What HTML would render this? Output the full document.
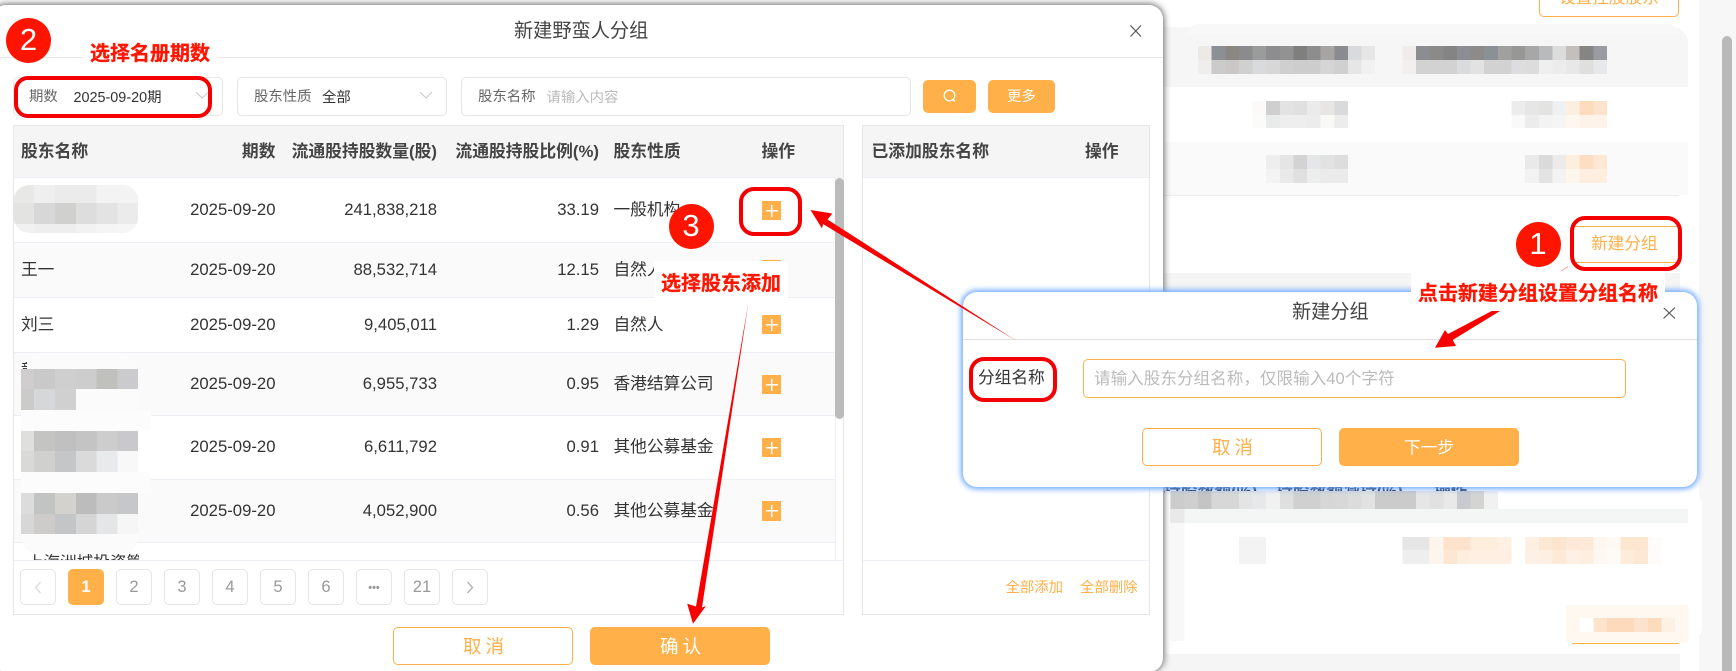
<!DOCTYPE html>
<html lang="zh-CN">
<head>
<meta charset="utf-8">
<title>新建野蛮人分组</title>
<style>
html,body{margin:0;padding:0;width:1736px;height:671px;overflow:hidden;background:#fff}
body{position:relative;font-family:"Liberation Sans","Noto Sans CJK SC",sans-serif;color:#333}
div,span{box-sizing:border-box}
.a{position:absolute}
.t{position:absolute;white-space:nowrap;line-height:20px;height:20px;margin-top:1px}
.c{font-size:16.7px;color:#333}
.h{font-size:16.8px;font-weight:700;color:#444}
.s{font-size:14.4px}
.box{position:absolute;border:1px solid #e6e6e6;border-radius:5px;background:#fff}
.add{position:absolute;left:762px;width:19px;height:19px;background:linear-gradient(#fff,#fff) center/12px 1.5px no-repeat,linear-gradient(#fff,#fff) center/1.5px 12px no-repeat,#ffb049}
.row{position:absolute;left:14px;width:821px;border-bottom:1px solid #eeeff4}
.p{position:absolute;top:569px;width:36px;height:36px;border:1px solid #e6e6e6;border-radius:5px;text-align:center;line-height:34px;font-size:16.6px;color:#999;background:#fff}
.btn{position:absolute;height:38px;border-radius:5px;text-align:center;line-height:37px;font-size:18.5px;letter-spacing:4px;padding-left:5px;border:1px solid #ffb049;color:#ffb049;background:#fff}
.on{background:#ffb049;color:#fff}
.circ{position:absolute;width:45px;height:45px;border-radius:50%;background:#ff1400;color:#fff;font-size:31px;line-height:44px;text-align:center}
.lab{position:absolute;background:#fff;color:#ff1500;font-family:"Noto Sans CJK SC",sans-serif;font-weight:700;font-size:20px;text-align:center;white-space:nowrap;-webkit-text-stroke:.3px #ff1500}
.rr{position:absolute;border:4.5px solid #f50000;border-radius:15px}
svg{position:absolute;left:0;top:0}
</style>
</head>
<body>

<!-- background page -->
<div class="a" style="left:1699px;top:0;width:37px;height:671px;background:#f7f7f7"></div>
<div class="a" style="left:1722px;top:36px;width:10px;height:640px;background:#b9b9b9;border-radius:5px 5px 0 0"></div>
<div class="a" style="left:1539px;top:-20px;width:140px;height:37px;border:1px solid #ffb049;border-radius:5px;text-align:center;color:#ffb049;font-size:16.6px;line-height:33px">设置控股股东</div>
<div class="a" style="left:1160px;top:27px;width:528px;height:60px;background:#f6f6f6;border-radius:0 16px 0 0"></div>
<div class="a" style="left:1188px;top:24px;width:490px;height:10px;background:#f8f8f8;border-radius:16px 16px 0 0"></div>
<div class="a" style="left:1160px;top:142px;width:528px;height:53px;background:#fafafa"></div>
<div class="a" style="left:1160px;top:195px;width:519px;height:1px;background:#ececec"></div>
<div class="a" style="left:1160px;top:273px;width:520px;height:20px;background:#f5f5f5"></div>
<div class="a" style="left:1575px;top:226px;width:104px;height:37px;border-top:1px solid #ffb049;border-bottom:1px solid #ffb049"></div>
<div class="t" style="left:1591px;top:233px;font-size:16.7px;color:#ffb049">新建分组</div>
<div class="t h" style="left:1164px;top:481px;color:#24324a">持股数额(%)</div>
<div class="t h" style="left:1276px;top:481px;color:#24324a">持股数额减持(%)</div>
<div class="t h" style="left:1434px;top:481px;color:#24324a">操作</div>
<div class="a" style="left:1165px;top:491px;width:537px;height:150px;background:#fff;border-radius:0 14px 14px 14px"></div>
<div class="a" style="left:1170px;top:509px;width:518px;height:14px;background:#f4f6f6"></div>
<div class="a" style="left:1572px;top:643px;width:107px;height:1px;background:#ffb049"></div>
<div class="a" style="left:1165px;top:654px;width:515px;height:17px;background:#f5f5f5"></div>

<svg width="1736" height="671" shape-rendering="crispEdges">
<g transform="translate(1198,0) scale(13.63,1)">
<!-- row1 top -->
<g>
<rect x="0" y="46" width="1" height="14" fill="#ece9e7"/><rect x="1" y="46" width="1" height="14" fill="#8c8f94"/><rect x="2" y="46" width="1" height="14" fill="#8a8783"/><rect x="3" y="46" width="1" height="14" fill="#8b8b8d"/><rect x="4" y="46" width="1" height="14" fill="#9a9c9b"/><rect x="5" y="46" width="1" height="14" fill="#8d8d8f"/><rect x="6" y="46" width="1" height="14" fill="#929293"/><rect x="7" y="46" width="1" height="14" fill="#7f7f7d"/><rect x="8" y="46" width="1" height="14" fill="#8d8d8d"/><rect x="9" y="46" width="1" height="14" fill="#a6a5a3"/><rect x="10" y="46" width="1" height="14" fill="#898b8e"/><rect x="11" y="46" width="1" height="14" fill="#d9dadc"/><rect x="12" y="46" width="1" height="14" fill="#e6e6e6"/>
<rect x="0" y="60" width="1" height="14" fill="#efeeec"/><rect x="1" y="60" width="1" height="14" fill="#cbcbcb"/><rect x="2" y="60" width="1" height="14" fill="#c9c8c6"/><rect x="3" y="60" width="1" height="14" fill="#cfd0cf"/><rect x="4" y="60" width="1" height="14" fill="#d9dadb"/><rect x="5" y="60" width="1" height="14" fill="#d6d7d6"/><rect x="6" y="60" width="1" height="14" fill="#cecfce"/><rect x="7" y="60" width="1" height="14" fill="#cdcdcd"/><rect x="8" y="60" width="1" height="14" fill="#cdcdcd"/><rect x="9" y="60" width="1" height="14" fill="#d4d5d4"/><rect x="10" y="60" width="1" height="14" fill="#cfd0cf"/><rect x="11" y="60" width="1" height="14" fill="#e6e6e6"/><rect x="12" y="60" width="1" height="14" fill="#f1f1f1"/>
<rect x="15" y="46" width="1" height="14" fill="#f0ecea"/><rect x="16" y="46" width="1" height="14" fill="#8c8d90"/><rect x="17" y="46" width="1" height="14" fill="#8c8a88"/><rect x="18" y="46" width="1" height="14" fill="#848484"/><rect x="19" y="46" width="1" height="14" fill="#8c8d92"/><rect x="20" y="46" width="1" height="14" fill="#8d8b8a"/><rect x="21" y="46" width="1" height="14" fill="#8a9093"/><rect x="22" y="46" width="1" height="14" fill="#a0a09e"/><rect x="23" y="46" width="1" height="14" fill="#979796"/><rect x="24" y="46" width="1" height="14" fill="#a7a7a8"/><rect x="25" y="46" width="1" height="14" fill="#b9babc"/><rect x="26" y="46" width="1" height="14" fill="#dcdcdc"/><rect x="27" y="46" width="1" height="14" fill="#c3c0bc"/><rect x="28" y="46" width="1" height="14" fill="#858583"/><rect x="29" y="46" width="1" height="14" fill="#989b9f"/>
<rect x="15" y="60" width="1" height="14" fill="#f1f0ef"/><rect x="16" y="60" width="1" height="14" fill="#d2d2d2"/><rect x="17" y="60" width="1" height="14" fill="#d2d2d2"/><rect x="18" y="60" width="1" height="14" fill="#d2d2d2"/><rect x="19" y="60" width="1" height="14" fill="#dadbdc"/><rect x="20" y="60" width="1" height="14" fill="#e2e2e2"/><rect x="21" y="60" width="1" height="14" fill="#d2d2d3"/><rect x="22" y="60" width="1" height="14" fill="#d2d2d2"/><rect x="23" y="60" width="1" height="14" fill="#dddddf"/><rect x="24" y="60" width="1" height="14" fill="#dcdcdc"/><rect x="25" y="60" width="1" height="14" fill="#efefef"/><rect x="26" y="60" width="1" height="14" fill="#ececec"/><rect x="27" y="60" width="1" height="14" fill="#e8e8e8"/><rect x="28" y="60" width="1" height="14" fill="#dfdfdd"/><rect x="29" y="60" width="1" height="14" fill="#e7e8ea"/>
</g>
<!-- row2 -->
<g>
<rect x="4" y="101" width="1" height="14" fill="#fbfaf8"/><rect x="5" y="101" width="1" height="14" fill="#cfcfcf"/><rect x="6" y="101" width="1" height="14" fill="#e3e3e3"/><rect x="7" y="101" width="1" height="14" fill="#e0e0e0"/><rect x="8" y="101" width="1" height="14" fill="#ebebeb"/><rect x="9" y="101" width="1" height="14" fill="#e7e6e4"/><rect x="10" y="101" width="1" height="14" fill="#d9dadc"/>
<rect x="4" y="115" width="1" height="13" fill="#fbfbfa"/><rect x="5" y="115" width="1" height="13" fill="#e9eaea"/><rect x="6" y="115" width="1" height="13" fill="#eeeeee"/><rect x="7" y="115" width="1" height="13" fill="#eeeeee"/><rect x="8" y="115" width="1" height="13" fill="#ececec"/><rect x="9" y="115" width="1" height="13" fill="#f9f9f6"/><rect x="10" y="115" width="1" height="13" fill="#ececec"/>
<rect x="23" y="101" width="1" height="14" fill="#ececec"/><rect x="24" y="101" width="1" height="14" fill="#e6e6e6"/><rect x="25" y="101" width="1" height="14" fill="#e3e3e1"/><rect x="26" y="101" width="1" height="14" fill="#eef0f2"/><rect x="27" y="101" width="1" height="14" fill="#fdefe0"/><rect x="28" y="101" width="1" height="14" fill="#fddcbe"/><rect x="29" y="101" width="1" height="14" fill="#fde3cc"/>
<rect x="23" y="115" width="1" height="13" fill="#f9f9f9"/><rect x="24" y="115" width="1" height="13" fill="#ececec"/><rect x="25" y="115" width="1" height="13" fill="#f3f3f3"/><rect x="26" y="115" width="1" height="13" fill="#f5f5f5"/><rect x="27" y="115" width="1" height="13" fill="#fef7f0"/><rect x="28" y="115" width="1" height="13" fill="#fef3e8"/><rect x="29" y="115" width="1" height="13" fill="#fef3ea"/>
</g>
<!-- row3 -->
<g>
<rect x="5" y="155" width="1" height="14" fill="#eeeeee"/><rect x="6" y="155" width="1" height="14" fill="#e5e5e5"/><rect x="7" y="155" width="1" height="14" fill="#d3d3d3"/><rect x="8" y="155" width="1" height="14" fill="#e4e6e8"/><rect x="9" y="155" width="1" height="14" fill="#e2e2e2"/><rect x="10" y="155" width="1" height="14" fill="#dcdddc"/>
<rect x="5" y="169" width="1" height="14" fill="#f3f3f3"/><rect x="6" y="169" width="1" height="14" fill="#e9e9e9"/><rect x="7" y="169" width="1" height="14" fill="#e0e0e0"/><rect x="8" y="169" width="1" height="14" fill="#eceeed"/><rect x="9" y="169" width="1" height="14" fill="#ebebeb"/><rect x="10" y="169" width="1" height="14" fill="#ebebeb"/>
<rect x="24" y="155" width="1" height="14" fill="#e9e9e9"/><rect x="25" y="155" width="1" height="14" fill="#dadada"/><rect x="26" y="155" width="1" height="14" fill="#ebebeb"/><rect x="27" y="155" width="1" height="14" fill="#fdeedd"/><rect x="28" y="155" width="1" height="14" fill="#fddec2"/><rect x="29" y="155" width="1" height="14" fill="#fce8d4"/>
<rect x="24" y="169" width="1" height="14" fill="#f2f2f2"/><rect x="25" y="169" width="1" height="14" fill="#e3e3e3"/><rect x="26" y="169" width="1" height="14" fill="#f2f3f2"/><rect x="27" y="169" width="1" height="14" fill="#fef5ec"/><rect x="28" y="169" width="1" height="14" fill="#fdeee0"/><rect x="29" y="169" width="1" height="14" fill="#fdeee0"/>
</g>
<!-- lower band -->
<g>
<rect x="-2" y="491" width="1" height="18" fill="#cccccc"/><rect x="-1" y="491" width="1" height="18" fill="#cfcfcf"/><rect x="0" y="491" width="1" height="18" fill="#c4c4c4"/><rect x="1" y="491" width="2" height="18" fill="#d7d7d7"/><rect x="3" y="491" width="1" height="18" fill="#e4e4e4"/><rect x="4" y="491" width="1" height="18" fill="#e6e8ea"/><rect x="5" y="491" width="1" height="18" fill="#f1f1f1"/><rect x="6" y="491" width="1" height="18" fill="#dedfde"/><rect x="7" y="491" width="1" height="18" fill="#cfd0cf"/><rect x="8" y="491" width="1" height="18" fill="#d0d0d0"/><rect x="9" y="491" width="1" height="18" fill="#d6d7d6"/><rect x="10" y="491" width="1" height="18" fill="#d8d8d8"/><rect x="11" y="491" width="1" height="18" fill="#dcdcdc"/><rect x="12" y="491" width="1" height="18" fill="#e2e2e2"/><rect x="13" y="491" width="2" height="18" fill="#cbcbcb"/><rect x="15" y="491" width="1" height="18" fill="#cbcbcb"/><rect x="16" y="491" width="1" height="18" fill="#e6e6e6"/><rect x="17" y="491" width="1" height="18" fill="#e1e1e1"/><rect x="18" y="491" width="1" height="18" fill="#e9e9e9"/><rect x="19" y="491" width="1" height="18" fill="#c9cacf"/><rect x="20" y="491" width="1" height="18" fill="#d4d4d2"/><rect x="21" y="491" width="1" height="18" fill="#f1f1f1"/>
<rect x="-2" y="509" width="1" height="14" fill="#e9e9e9"/><rect x="-2" y="523" width="1" height="118" fill="#f8f8f8"/>
</g>
<!-- orange row -->
<g>
<rect x="3" y="537" width="2" height="27" fill="#f3f3f3"/>
<rect x="15" y="537" width="2" height="13" fill="#e6e6e6"/><rect x="17" y="537" width="1" height="13" fill="#fdf5ec"/><rect x="18" y="537" width="2" height="13" fill="#fde3cc"/><rect x="20" y="537" width="2" height="13" fill="#fdeddc"/><rect x="22" y="537" width="1" height="13" fill="#fef0e2"/>
<rect x="15" y="550" width="2" height="14" fill="#eeeeee"/><rect x="17" y="550" width="1" height="14" fill="#fdf6ef"/><rect x="18" y="550" width="1" height="14" fill="#fde7d2"/><rect x="19" y="550" width="1" height="14" fill="#fdeddd"/><rect x="20" y="550" width="3" height="14" fill="#feefe2"/>
<rect x="24" y="537" width="1" height="13" fill="#fdefe1"/><rect x="25" y="537" width="1" height="13" fill="#fde8d3"/><rect x="26" y="537" width="1" height="13" fill="#fde4cf"/><rect x="27" y="537" width="2" height="13" fill="#fde9d7"/><rect x="29" y="537" width="1" height="13" fill="#fef7f0"/><rect x="30" y="537" width="1" height="13" fill="#fef9f4"/><rect x="31" y="537" width="2" height="13" fill="#fde6cf"/><rect x="33" y="537" width="1" height="13" fill="#fefbf9"/>
<rect x="24" y="550" width="1" height="14" fill="#fdf0e4"/><rect x="25" y="550" width="1" height="14" fill="#fdefe1"/><rect x="26" y="550" width="1" height="14" fill="#fde9d6"/><rect x="27" y="550" width="1" height="14" fill="#fef0e4"/><rect x="28" y="550" width="1" height="14" fill="#feeee0"/><rect x="29" y="550" width="1" height="14" fill="#fef8f2"/><rect x="30" y="550" width="1" height="14" fill="#fefaf5"/><rect x="31" y="550" width="1" height="14" fill="#fdecdc"/><rect x="32" y="550" width="1" height="14" fill="#fde8d6"/><rect x="33" y="550" width="1" height="14" fill="#fefcfa"/>
<rect x="27" y="605" width="9" height="37" fill="#fef8f1"/>
<rect x="28" y="618" width="1" height="14" fill="#ffffff"/><rect x="29" y="618" width="1" height="14" fill="#fde3cc"/><rect x="30" y="618" width="2" height="14" fill="#fddabb"/><rect x="32" y="618" width="1" height="14" fill="#fde3cc"/><rect x="33" y="618" width="1" height="14" fill="#fddcbe"/><rect x="34" y="618" width="1" height="14" fill="#fdf0e4"/>
</g>
</g>
</svg>

<!-- main modal -->
<div class="a" style="left:-8px;top:5px;width:1171px;height:667px;background:#fff;border-radius:14px;box-shadow:0 0 7px 1px #666"></div>
<div class="a" style="left:0;top:57px;width:1163px;height:1px;background:#e8e8e8"></div>
<div class="t" style="left:514px;top:21px;font-size:19.2px;color:#444">新建野蛮人分组</div>
<svg width="1736" height="671">
<path d="M1130.5 25.5L1141 36.5M1141 25.5L1130.5 36.5" stroke="#555" stroke-width="1.2" fill="none"/>
</svg>

<!-- filters -->
<div class="box" style="left:13px;top:77px;width:210px;height:39px"></div>
<div class="box" style="left:237px;top:77px;width:210px;height:39px"></div>
<div class="box" style="left:461px;top:77px;width:450px;height:39px"></div>
<div class="t s" style="left:29px;top:86px;color:#666">期数</div>
<div class="t s" style="left:73.5px;top:87px;color:#333">2025-09-20期</div>
<div class="t s" style="left:254px;top:86px;color:#666">股东性质</div>
<div class="t s" style="left:322px;top:87px;color:#333">全部</div>
<div class="t s" style="left:478px;top:86px;color:#666">股东名称</div>
<div class="t s" style="left:546.5px;top:87px;color:#bbb">请输入内容</div>
<div class="a" style="left:923px;top:80px;width:53px;height:33px;background:#ffb049;border-radius:5px"></div>
<div class="a" style="left:988px;top:80px;width:67px;height:33px;background:#ffb049;border-radius:5px"></div>
<div class="t s" style="left:1007px;top:86px;color:#fff">更多</div>

<!-- left table -->
<div class="a" style="left:13px;top:125px;width:831px;height:490px;border:1px solid #e6e6e6;background:#fff"></div>
<div class="a" style="left:14px;top:126px;width:829px;height:52px;background:#f5f5f6;border-bottom:1px solid #eeeff4"></div>
<div class="t h" style="left:21px;top:141px">股东名称</div>
<div class="t h" style="right:1460.5px;top:141px">期数</div>
<div class="t h" style="right:1299px;top:141px">流通股持股数量(股)</div>
<div class="t h" style="right:1137px;top:141px">流通股持股比例(%)</div>
<div class="t h" style="left:613.5px;top:141px">股东性质</div>
<div class="t h" style="left:761.5px;top:141px">操作</div>

<div class="row" style="top:178px;height:65px"></div>
<div class="row" style="top:243px;height:55px;background:#fafafa"></div>
<div class="row" style="top:298px;height:55px"></div>
<div class="row" style="top:353px;height:63px;background:#fafafa"></div>
<div class="row" style="top:416px;height:64px"></div>
<div class="row" style="top:480px;height:63px;background:#fafafa"></div>
<div class="a" style="left:835px;top:178px;width:1px;height:382px;background:#eeeff4"></div>
<div class="a" style="left:835px;top:178px;width:9px;height:241px;background:#bbb;border-radius:5px"></div>
<div class="a" style="left:14px;top:560px;width:829px;height:1px;background:#eeeff4"></div>

<div class="t c" style="left:21px;top:259px">王一</div>
<div class="t c" style="left:21px;top:314px">刘三</div>

<div class="t c" style="right:1460.5px;top:199px">2025-09-20</div>
<div class="t c" style="right:1460.5px;top:259px">2025-09-20</div>
<div class="t c" style="right:1460.5px;top:314px">2025-09-20</div>
<div class="t c" style="right:1460.5px;top:373px">2025-09-20</div>
<div class="t c" style="right:1460.5px;top:436px">2025-09-20</div>
<div class="t c" style="right:1460.5px;top:500px">2025-09-20</div>

<div class="t c" style="right:1299px;top:199px">241,838,218</div>
<div class="t c" style="right:1299px;top:259px">88,532,714</div>
<div class="t c" style="right:1299px;top:314px">9,405,011</div>
<div class="t c" style="right:1299px;top:373px">6,955,733</div>
<div class="t c" style="right:1299px;top:436px">6,611,792</div>
<div class="t c" style="right:1299px;top:500px">4,052,900</div>

<div class="t c" style="right:1137px;top:199px">33.19</div>
<div class="t c" style="right:1137px;top:259px">12.15</div>
<div class="t c" style="right:1137px;top:314px">1.29</div>
<div class="t c" style="right:1137px;top:373px">0.95</div>
<div class="t c" style="right:1137px;top:436px">0.91</div>
<div class="t c" style="right:1137px;top:500px">0.56</div>

<div class="t c" style="left:613.5px;top:199px">一般机构</div>
<div class="t c" style="left:613.5px;top:259px">自然人</div>
<div class="t c" style="left:613.5px;top:314px">自然人</div>
<div class="t c" style="left:613.5px;top:373px">香港结算公司</div>
<div class="t c" style="left:613.5px;top:436px">其他公募基金</div>
<div class="t c" style="left:613.5px;top:500px">其他公募基金</div>

<div class="add" style="top:201px"></div>
<div class="add" style="top:260px"></div>
<div class="add" style="top:315px"></div>
<div class="add" style="top:375px"></div>
<div class="add" style="top:438px"></div>
<div class="add" style="top:501px;height:20px"></div>

<div class="a" style="left:27px;top:553px;width:112px;height:7px;overflow:hidden;font-size:16.6px;line-height:20px;color:#333;white-space:nowrap">上海洲城投资管理</div>

<!-- name mosaics -->
<svg width="1736" height="671" shape-rendering="crispEdges">
<defs><clipPath id="c1"><rect x="13.4" y="185" width="125" height="48" rx="16"/></clipPath></defs>
<rect x="21" y="354" width="117" height="199" rx="16" fill="#fbfbfb" shape-rendering="auto"/>
<rect x="21" y="410" width="130" height="20" fill="#fcfcfc"/>
<rect x="21" y="472" width="130" height="21" fill="#fcfcfc"/>
<g clip-path="url(#c1)"><g transform="translate(13.4,0) scale(20.8,1)">
<rect x="0" y="185" width="1" height="18" fill="#e8e8e6"/><rect x="1" y="185" width="1" height="18" fill="#efefef"/><rect x="2" y="185" width="1" height="18" fill="#ebebeb"/><rect x="3" y="185" width="1" height="18" fill="#ebebeb"/><rect x="4" y="185" width="1" height="18" fill="#f3f3f3"/><rect x="5" y="185" width="1" height="18" fill="#f3f3f3"/>
<rect x="0" y="203" width="1" height="21" fill="#e3e3e1"/><rect x="1" y="203" width="1" height="21" fill="#d7d7d7"/><rect x="2" y="203" width="1" height="21" fill="#d0d1cf"/><rect x="3" y="203" width="1" height="21" fill="#dddddd"/><rect x="4" y="203" width="1" height="21" fill="#e3e3e3"/><rect x="5" y="203" width="1" height="21" fill="#ebebeb"/>
<rect x="0" y="224" width="1" height="9" fill="#f1f1f1"/><rect x="1" y="224" width="1" height="9" fill="#eeeeee"/><rect x="2" y="224" width="1" height="9" fill="#eeeeee"/><rect x="3" y="224" width="1" height="9" fill="#f2f2f2"/><rect x="4" y="224" width="1" height="9" fill="#f5f5f5"/><rect x="5" y="224" width="1" height="9" fill="#f6f6f6"/>
</g></g>
<g transform="translate(13.4,0) scale(20.8,1)">
<rect x=".37" y="369" width=".63" height="20" fill="#cfcdcd"/><rect x="1" y="369" width="1" height="20" fill="#c9c9c9"/><rect x="2" y="369" width="1" height="20" fill="#cfcfcf"/><rect x="3" y="369" width="1" height="20" fill="#cdcdcd"/><rect x="4" y="369" width="1" height="20" fill="#c0c0bc"/><rect x="5" y="369" width="1" height="20" fill="#cbcbcd"/>
<rect x=".37" y="389" width=".63" height="21" fill="#cbcbc9"/><rect x="1" y="389" width="1" height="21" fill="#d6d7d9"/><rect x="2" y="389" width="1" height="21" fill="#d0d0d0"/>
<rect x=".37" y="431" width=".63" height="20" fill="#dfdfdd"/><rect x="1" y="431" width="1" height="20" fill="#c4c4c2"/><rect x="2" y="431" width="1" height="20" fill="#c0c0c0"/><rect x="3" y="431" width="1" height="20" fill="#c4c4c4"/><rect x="4" y="431" width="1" height="20" fill="#cdcdcd"/><rect x="5" y="431" width="1" height="20" fill="#c9c9cb"/>
<rect x=".37" y="451" width=".63" height="21" fill="#d9d9d7"/><rect x="1" y="451" width="1" height="21" fill="#d0d0ce"/><rect x="2" y="451" width="1" height="21" fill="#c5c6c8"/><rect x="3" y="451" width="1" height="21" fill="#dadada"/><rect x="4" y="451" width="1" height="21" fill="#e9eaec"/><rect x="5" y="451" width="1" height="21" fill="#f8f8f8"/>
<rect x=".37" y="493" width=".63" height="21" fill="#dcdcdc"/><rect x="1" y="493" width="1" height="21" fill="#c2c4c3"/><rect x="2" y="493" width="1" height="21" fill="#d3d2ce"/><rect x="3" y="493" width="1" height="21" fill="#bcbcbc"/><rect x="4" y="493" width="1" height="21" fill="#cacaca"/><rect x="5" y="493" width="1" height="21" fill="#c6c7c9"/>
<rect x=".37" y="514" width=".63" height="20" fill="#d8d7d8"/><rect x="1" y="514" width="1" height="20" fill="#cdccca"/><rect x="2" y="514" width="1" height="20" fill="#c4c5c7"/><rect x="3" y="514" width="1" height="20" fill="#d5d5d5"/><rect x="4" y="514" width="1" height="20" fill="#e5e6e8"/><rect x="5" y="514" width="1" height="20" fill="#f6f6f6"/>
</g>
</svg>
<div class="a" style="left:21px;top:362px;width:6px;height:7px;overflow:hidden;font-size:16.6px;line-height:18px;color:#333">彰</div>

<!-- pagination -->
<div class="p" style="left:20px;color:#ddd"><svg width="34" height="34" style="position:static;display:block"><path d="M19.5 12L14.5 17.5L19.5 23" stroke="#dcdcdc" stroke-width="1.4" fill="none"/></svg></div>
<div class="p" style="left:68px;background:#ffb049;border-color:#ffb049;color:#fff;font-weight:700">1</div>
<div class="p" style="left:116px">2</div>
<div class="p" style="left:164px">3</div>
<div class="p" style="left:212px">4</div>
<div class="p" style="left:260px">5</div>
<div class="p" style="left:308px">6</div>
<div class="p" style="left:356px;font-size:11px;line-height:36px;font-weight:700;letter-spacing:0">•••</div>
<div class="p" style="left:404px">21</div>
<div class="p" style="left:452px"><svg width="34" height="34" style="position:static;display:block"><path d="M14.5 12L19.5 17.5L14.5 23" stroke="#b5b5b5" stroke-width="1.4" fill="none"/></svg></div>

<!-- right table -->
<div class="a" style="left:862px;top:125px;width:288px;height:490px;border:1px solid #e6e6e6;background:#fff"></div>
<div class="a" style="left:863px;top:126px;width:286px;height:52px;background:#f5f5f6;border-bottom:1px solid #eeeff4"></div>
<div class="a" style="left:863px;top:560px;width:286px;height:1px;background:#eeeff4"></div>
<div class="t h" style="left:871.5px;top:141px">已添加股东名称</div>
<div class="t h" style="left:1085px;top:141px">操作</div>
<div class="t s" style="left:1005.5px;top:577px;color:#ffb049">全部添加</div>
<div class="t s" style="left:1080px;top:577px;color:#ffb049">全部删除</div>

<!-- footer buttons -->
<div class="btn" style="left:393px;top:627px;width:180px">取消</div>
<div class="btn on" style="left:590px;top:627px;width:180px">确认</div>

<!-- small modal -->
<div class="a" style="left:963px;top:292px;width:734px;height:195px;background:#fff;border-radius:14px;box-shadow:0 0 6px 2px #6aa6ff"></div>
<div class="a" style="left:963px;top:339px;width:734px;height:1px;background:#e2e2e2"></div>
<div class="t" style="left:1292px;top:302px;font-size:19.2px;color:#444">新建分组</div>
<div class="t" style="left:978px;top:367px;font-size:16.7px;color:#333">分组名称</div>
<div class="a" style="left:1083px;top:359px;width:543px;height:39px;border:1px solid #ffb049;border-radius:5px;background:#fff"></div>
<div class="t" style="left:1094px;top:368px;font-size:16.6px;color:#bbb">请输入股东分组名称，仅限输入40个字符</div>
<div class="btn" style="left:1142px;top:428px;width:180px">取消</div>
<div class="btn on" style="left:1339px;top:428px;width:180px;letter-spacing:0;padding-left:0;font-size:16.7px">下一步</div>
<svg width="1736" height="671">
<path d="M1663.5 307.5L1675 318.5M1675 307.5L1663.5 318.5" stroke="#555" stroke-width="1.2" fill="none"/>
</svg>

<!-- filter icons drawn over -->
<svg width="1736" height="671">
<path d="M196 92L202 98L208.500 92" stroke="#ccc" stroke-width="1.100" fill="none"/>
<path d="M420 92L426 98L432 92" stroke="#ccc" stroke-width="1.100" fill="none"/>
<circle cx="949.500" cy="95.500" r="5.300" stroke="#fff" stroke-width="1.300" fill="none"/>
<path d="M953 99.500L955 101.500" stroke="#fff" stroke-width="1.300"/>
</svg>

<!-- annotations -->
<div class="lab" style="left:83px;top:38px;width:134px;height:28px;line-height:28px">选择名册期数</div>
<div class="lab" style="left:654px;top:261px;width:134px;height:37px;line-height:42px">选择股东添加</div>
<div class="lab" style="left:1411px;top:273px;width:254px;height:35px;line-height:38px">点击新建分组设置分组名称</div>

<div class="circ" style="left:6px;top:18px">2</div>
<div class="circ" style="left:668.500px;top:203.500px">3</div>
<div class="circ" style="left:1515.500px;top:221.500px">1</div>

<div class="rr" style="left:14px;top:76px;width:198px;height:42px;border-radius:14px"></div>
<div class="rr" style="left:739px;top:187px;width:63px;height:49px"></div>
<div class="rr" style="left:1570px;top:216px;width:112px;height:55px"></div>
<div class="rr" style="left:969px;top:357px;width:88px;height:45px"></div>

<svg width="1736" height="671">
<polygon fill="#f80000" points="810.500,210 832.300,213.500 827.500,219.500 1019,342.500 823,224 822,228.500"/>
<polygon fill="#f80000" points="693,623.700 687.200,603.700 696,606.500 748.500,302 702,607.500 706,606"/>
<polygon fill="#f80000" points="1491.700,311 1500,311 1452.700,340 1456,346 1435,347.700 1445,330 1448,334"/>
<path d="M1561 271L1568 266.700" stroke="#f6a0a0" stroke-width="1"/>
</svg>

</body>
</html>
